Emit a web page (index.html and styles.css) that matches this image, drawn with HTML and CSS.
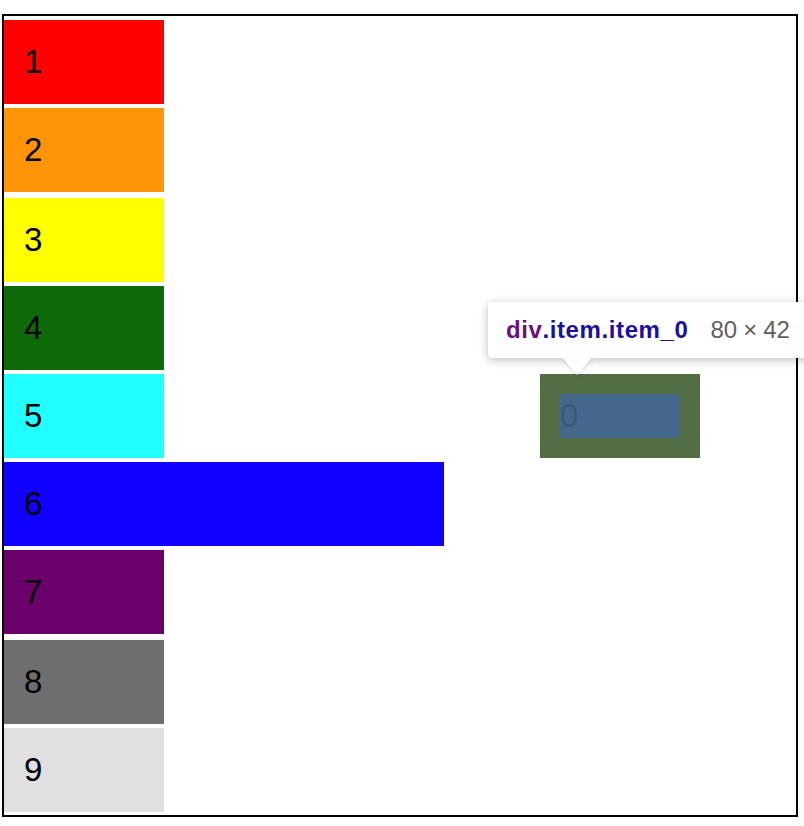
FILE: index.html
```html
<!DOCTYPE html>
<html>
<head>
<meta charset="utf-8">
<link rel="stylesheet" href="styles.css">
</head>
<body>
<div class="container">
  <div class="item c1">1</div>
  <div class="item c2">2</div>
  <div class="item c3 gap-top">3</div>
  <div class="item c4">4</div>
  <div class="item c5">5</div>
  <div class="item c6 wide">6</div>
  <div class="item c7">7</div>
  <div class="item c8 gap-top">8</div>
  <div class="item c9">9</div>

  <div class="item0">
    <div class="item0-content">0</div>
  </div>

  <div class="tooltip">
    <span class="tag">div</span><span class="cls">.item.item_0</span>
    <span class="size">80<span class="times">×</span>42</span>
  </div>
  <div class="arrow"></div>
</div>
</body>
</html>
```

FILE: styles.css
```css
html, body {
  margin: 0;
  padding: 0;
  background: #ffffff;
  overflow: hidden;
}

body {
  font-family: "Liberation Sans", Arial, sans-serif;
}

.container {
  position: relative;
  box-sizing: border-box;
  margin: 14px 0 0 2px;
  width: 796px;
  height: 803px;
  border: 2px solid #000000;
  padding-top: 4px;
  display: flex;
  flex-direction: column;
  gap: 4px;
}

.item {
  box-sizing: border-box;
  width: 160px;
  height: 84px;
  flex: none;
  display: flex;
  align-items: center;
  padding-left: 20px;
  font-size: 33px;
  color: #000000;
}

.gap-top { margin-top: 2px; }
.wide { width: 440px; }

.c1 { background: #ff0000; }
.c2 { background: #ff9408; }
.c3 { background: #ffff00; }
.c4 { background: #0e6a08; }
.c5 { background: #22ffff; }
.c6 { background: #1000ff; }
.c7 { background: #6b006a; }
.c8 { background: #6e6e6e; }
.c9 { background: #e0e0e0; }

.item0 {
  position: absolute;
  left: 536px;
  top: 358px;
  box-sizing: border-box;
  width: 160px;
  height: 84px;
  padding: 20px;
  background: #536e44;
}

.item0-content {
  height: 44px;
  background: #45678c;
  font-size: 33px;
  line-height: 44px;
  color: #3a5a80;
}

.tooltip {
  position: absolute;
  left: 484px;
  top: 286px;
  width: 340px;
  height: 56px;
  box-sizing: border-box;
  padding: 0 18px;
  background: #ffffff;
  border-radius: 4px;
  box-shadow: 0 2px 10px rgba(0, 0, 0, 0.25);
  display: flex;
  align-items: center;
  font-size: 24px;
  white-space: nowrap;
}

.tag {
  font-weight: bold;
  color: #6e0f78;
  letter-spacing: 0.6px;
}

.cls {
  font-weight: bold;
  color: #1a0f9e;
  letter-spacing: 0.6px;
}

.size {
  margin-left: 22px;
  color: #5f5f5f;
}

.times {
  margin: 0 6px;
}

.arrow {
  position: absolute;
  left: 558px;
  top: 341px;
  width: 0;
  height: 0;
  border-left: 15px solid transparent;
  border-right: 15px solid transparent;
  border-top: 18px solid #ffffff;
  filter: drop-shadow(0 2px 2px rgba(0, 0, 0, 0.12));
}
```
